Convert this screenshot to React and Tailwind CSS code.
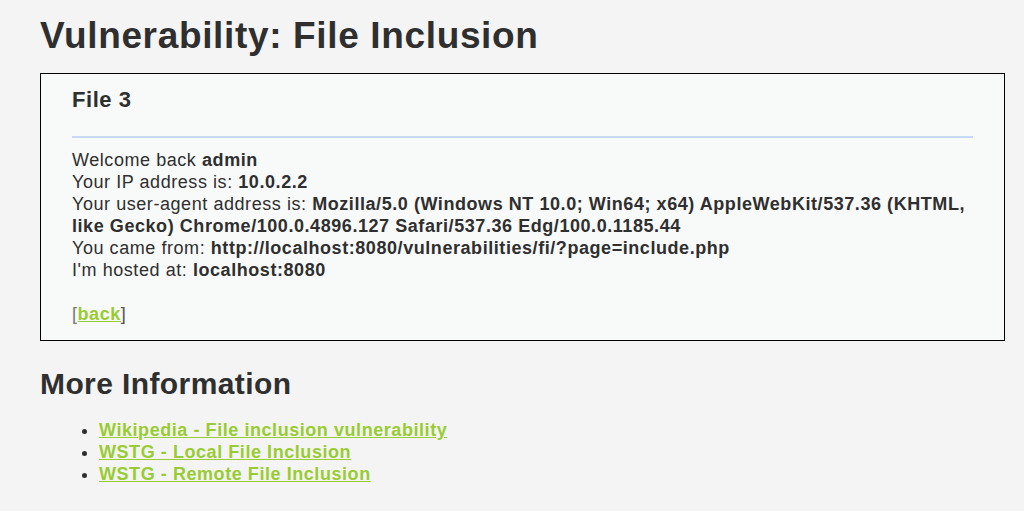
import React from 'react';

const links = [
  'Wikipedia - File inclusion vulnerability',
  'WSTG - Local File Inclusion',
  'WSTG - Remote File Inclusion',
];

const App = () => {
  return (
    <div className="min-h-[511px] bg-[#f4f4f4] text-[#2f2f2f] font-['Liberation_Sans',Arial,sans-serif] tracking-[0.56px] pl-10 pr-[19px] pt-[14px]">
      <h1 className="text-[37px] font-bold leading-[44px] tracking-[0.65px] mb-[15px]">Vulnerability: File Inclusion</h1>

      {/* Include box */}
      <div className="border border-black bg-[#f8f9f9] px-[31px] pt-[12px] pb-[15px] text-[18px] leading-[22px]">
        <h3 className="text-[22px] font-bold leading-[28px] mb-[22px]">File 3</h3>
        <div className="h-[2px] bg-[#c6d9fb] mb-[11px]"></div>
        <div>
          Welcome back <b>admin</b><br />
          Your IP address is: <b>10.0.2.2</b><br />
          Your user-agent address is: <b>Mozilla/5.0 (Windows NT 10.0; Win64; x64) AppleWebKit/537.36 (KHTML, like Gecko) Chrome/100.0.4896.127 Safari/537.36 Edg/100.0.1185.44</b><br />
          You came from: <b>http://localhost:8080/vulnerabilities/fi/?page=include.php</b><br />
          I'm hosted at: <b>localhost:8080</b><br />
          <br />
          <span className="text-[#777]">[</span><a href="#" className="text-[#99cc33] font-bold underline">back</a><span className="text-[#555]">]</span>
        </div>
      </div>

      <h2 className="text-[30px] font-bold leading-[36px] tracking-[0.4px] mt-[25px] mb-[17px]">More Information</h2>
      <ul className="list-disc pl-[59px] text-[18px] leading-[22px] marker:text-[#2f2f2f]">
        {links.map((l) => (
          <li key={l}>
            <a href="#" className="text-[#99cc33] font-bold underline">{l}</a>
          </li>
        ))}
      </ul>
    </div>
  );
};

export default App;
